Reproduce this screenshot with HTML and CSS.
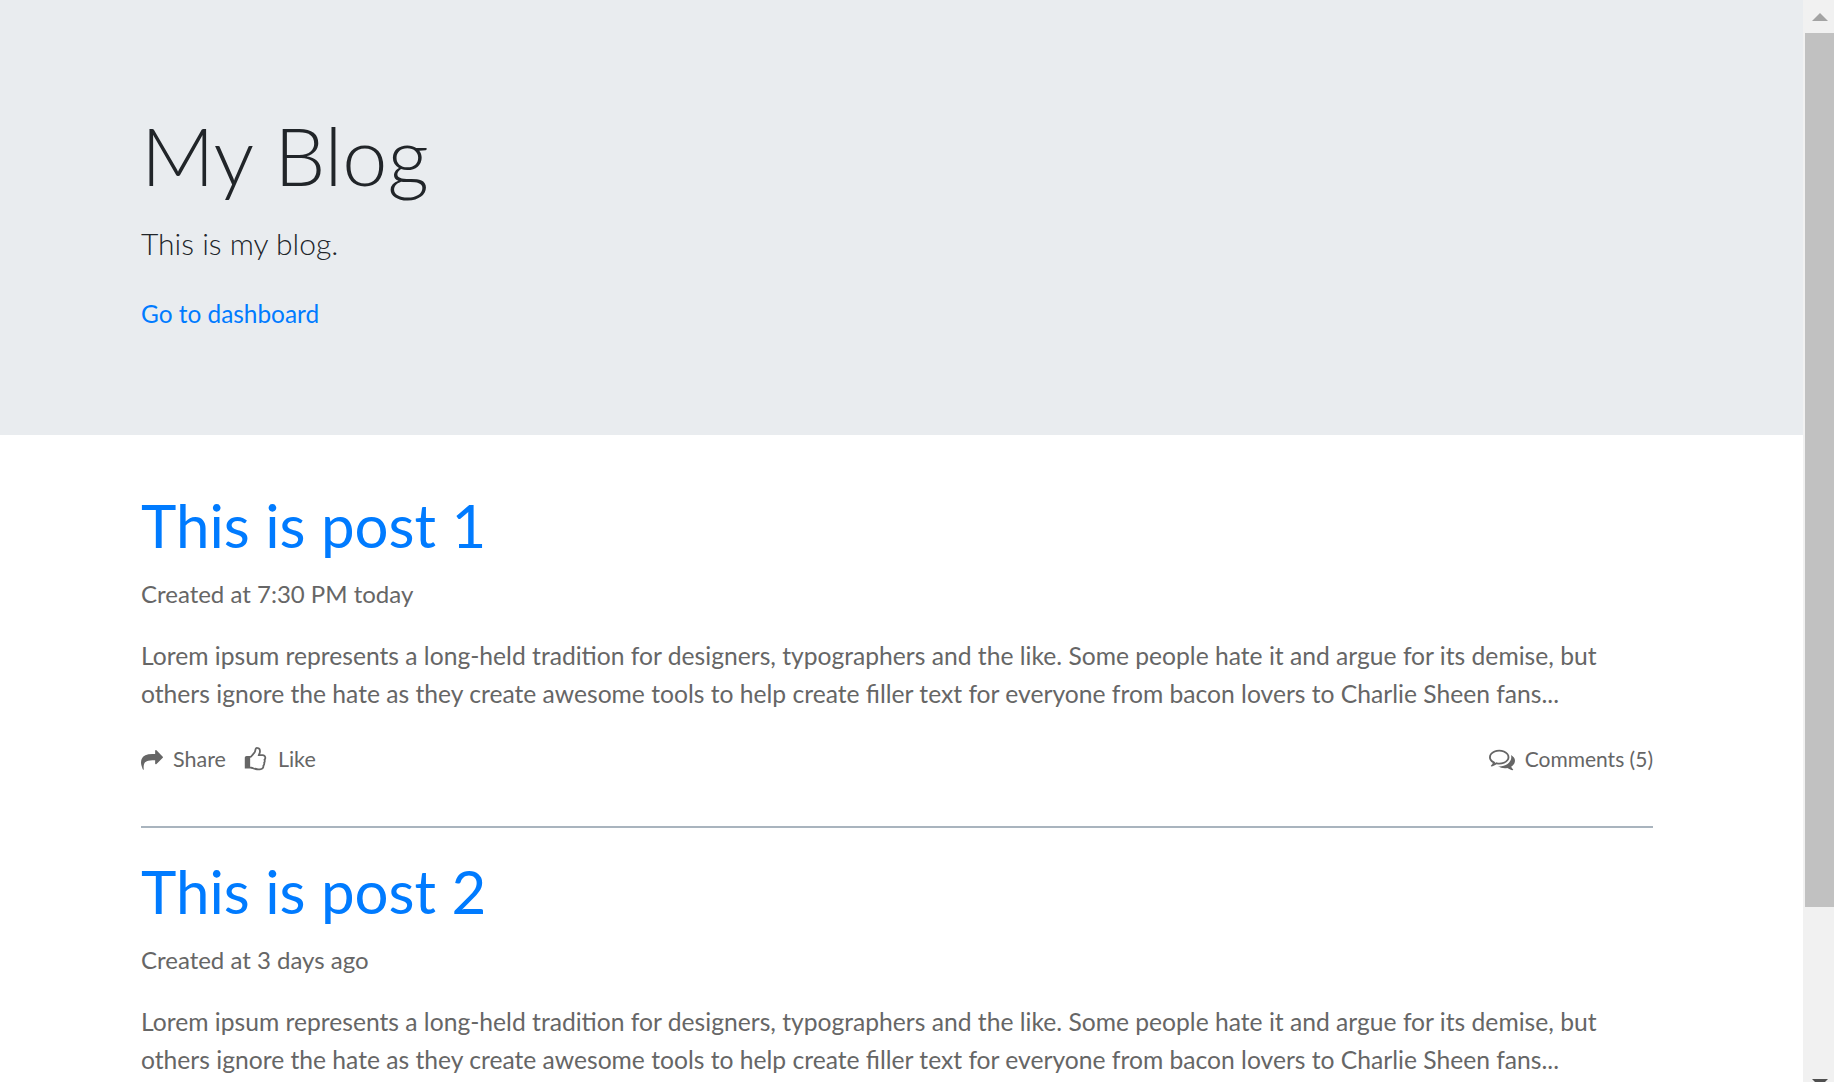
FILE: index.html
```html
<!DOCTYPE html>
<html lang="en">
<head>
    <meta charset="UTF-8">
    <title>My Blog</title>
    <link rel="stylesheet" href="styles.css">
</head>
<body>
    <div class="page">
        <header class="jumbotron">
            <h1>My Blog</h1>
            <p class="lead">This is my blog.</p>
            <a class="dash-link" href="#">Go to dashboard</a>
        </header>
        <main class="posts">
            <article class="post">
                <h2><a href="#">This is post 1</a></h2>
                <p class="meta">Created at 7:30 PM today</p>
                <p class="excerpt">Lorem ipsum represents a long-held tradition for designers, typographers and the like. Some people hate it and argue for its demise, but others ignore the hate as they create awesome tools to help create filler text for everyone from bacon lovers to Charlie Sheen fans...</p>
                <div class="actions">
                    <a href="#" class="action"><svg class="icon-share" viewBox="0 0 1792 1792"><path transform="matrix(1 0 0 -1 0 1389)" d="M1792 640q0 26-19 45l-512 512q-19 19-45 19t-45-19-19-45v-256h-224q-713 0-875-403-53-134-53-333 0-166 127-451 3-7 10.500-24t13.500-30 13-22q12-17 28-17 15 0 23.500 10t8.500 25q0 9-2.500 26.500t-2.500 23.500q-5 68-5 123 0 101 17.500 181t48.500 138.500 80 101 105.500 69.500 133 42.500 154 21.500 175.500 6h224v-256q0-26 19-45t45-19 45 19l512 512q19 19 19 45z"/></svg>Share</a>
                    <a href="#" class="action"><svg class="icon-like" viewBox="0 0 1792 1792"><path d="M128 768h384v768h-384zM1536 768q0-51-39-89.500t-89-38.500h-352q0-58 48-159.500t48-160.500q0-98-32-145t-128-47q-26 26-38 85t-30.500 125.500-59.500 109.500q-22 23-77 91-4 5-23 30t-31.500 41-34.500 42.500-40 44-38.500 35.500-40 27-35.500 9h-32v640h32q13 0 31.500 3t33 6.500 38 11 35 11.500 35.500 12.500 29 10.500q211 73 342 73h121q192 0 192-167 0-26-5-56 30-16 47.500-52.500t17.500-73.500-18-69q53-50 53-119 0-25-10-55.500t-25-47.500q32-1 53.500-47t21.500-81zm128-1q0 89-49 163 9 33 9 69 0 77-38 144 3 21 3 43 0 101-60 178 1 139-85 219.500t-227 80.500h-129q-96 0-189.500-22.500t-216.500-65.500q-116-40-138-40h-288q-53 0-90.500-37.500t-37.500-90.500v-640q0-53 37.500-90.500t90.500-37.500h274q36-24 137-155 58-75 107-128 24-25 35.500-85.500t30.500-126.500 62-108q39-37 90-37 84 0 151 32.500t102 101.500 35 186q0 93-48 192h176q104 0 180 76t76 179z"/></svg>Like</a>
                    <a href="#" class="action comments"><svg class="icon-comments" viewBox="0 0 1792 1792"><path d="M704 384q-153 0-286 52t-211.500 141-78.500 191q0 82 53 158t149 132l97 56-35 84q34-20 62-39l44-31 53 10q78 14 153 14 153 0 286-52t211.500-141 78.500-191-78.500-191-211.500-141-286-52zm0-128q191 0 353.500 68.500t256.500 186.500 94 257-94 257-256.500 186.500-353.500 68.500q-86 0-176-16-124 88-278 128-36 9-86 16h-3q-11 0-20.500-8t-11.500-21q-1-3-1-6.500t.5-6.500 2-6l2.500-5 3.500-5.500 4-5 4.500-5 4-4.500q5-6 23-25t26-29.500 22.500-29 25-38.500 20.500-44q-124-72-195-177t-71-224q0-139 94-257t256.500-186.500 353.500-68.500zm822 1169q10 24 20.500 44t25 38.500 22.500 29 26 29.500 23 25q1 1 4 4.500t4.500 5 4 5 3.500 5.500l2.500 5 2 6 .5 6.500-1 6.500q-3 14-13 22t-22 7q-50-7-86-16-154-40-278-128-90 16-176 16-271 0-472-132 58 4 88 4 161 0 309-45t264-129q125-92 192-212t67-254q0-77-23-152 129 71 204 178t75 230q0 120-71 224.500t-195 176.500z"/></svg>Comments (5)</a>
                </div>
            </article>
            <hr>
            <article class="post">
                <h2><a href="#">This is post 2</a></h2>
                <p class="meta">Created at 3 days ago</p>
                <p class="excerpt">Lorem ipsum represents a long-held tradition for designers, typographers and the like. Some people hate it and argue for its demise, but others ignore the hate as they create awesome tools to help create filler text for everyone from bacon lovers to Charlie Sheen fans...</p>
            </article>
        </main>
    </div>
    <div class="scrollbar">
        <span class="arrow-up"></span>
        <span class="thumb"></span>
        <span class="arrow-down"></span>
    </div>
</body>
</html>
```

FILE: styles.css
```css
* {
    margin: 0;
    padding: 0;
    box-sizing: border-box;
}

body {
    display: flex;
    height: 100vh;
    overflow: hidden;
    background-color: #ffffff;
    color: #212529;
    font-family: Lato, 'Noto Sans', sans-serif;
}

a {
    color: #007bff;
    text-decoration: none;
}

.page {
    flex: 1;
    min-width: 0;
    overflow: hidden;
}

.jumbotron {
    height: 435px;
    padding: 106px 141px 0;
    background-color: #e9ecef;
}

    .jumbotron h1 {
        font-size: 81px;
        font-weight: 300;
        line-height: 98px;
    }

    .jumbotron .lead {
        margin-top: 17px;
        font-size: 30px;
        font-weight: 300;
        line-height: 45px;
    }

.dash-link {
    display: block;
    margin-top: 29px;
    font-size: 24.4px;
    line-height: 38px;
}

.posts {
    padding: 27px 150px 0 141px;
}

.post h2 {
    padding-top: 28px;
    font-size: 60px;
    font-weight: 400;
    line-height: 70px;
}

.meta,
.excerpt {
    color: #666666;
    line-height: 38px;
}

.meta {
    margin-top: 15px;
    font-size: 24px;
}

.excerpt {
    margin-top: 24px;
    font-size: 24.65px;
}

.actions {
    display: flex;
    gap: 17px;
    margin-top: 31px;
    margin-bottom: 52px;
}

.action {
    display: flex;
    align-items: center;
    gap: 10px;
    color: #666666;
    font-size: 21.5px;
    line-height: 30px;
}

    .action svg {
        fill: currentColor;
    }

.icon-share {
    width: 22px;
    height: 22px;
}

.icon-like {
    width: 25px;
    height: 25px;
}

.icon-comments {
    width: 26px;
    height: 26px;
}

.comments {
    margin-left: auto;
    font-size: 21px;
}

hr {
    border: none;
    border-top: 2px solid #a9b4be;
}

.scrollbar {
    display: flex;
    flex-direction: column;
    align-items: flex-end;
    width: 31px;
    height: 100%;
    background-color: #f1f1f1;
}

.thumb {
    flex-shrink: 0;
    width: 29px;
    height: 874px;
    background-color: #c1c1c1;
}

.arrow-up,
.arrow-down {
    flex-shrink: 0;
    width: 0;
    height: 0;
    margin-right: 6px;
    border-left: 8px solid transparent;
    border-right: 8px solid transparent;
}

.arrow-up {
    margin-top: 13px;
    margin-bottom: 12px;
    border-bottom: 8px solid #a3a3a3;
}

.arrow-down {
    margin-top: 172px;
    border-top: 8px solid #505050;
}
```
